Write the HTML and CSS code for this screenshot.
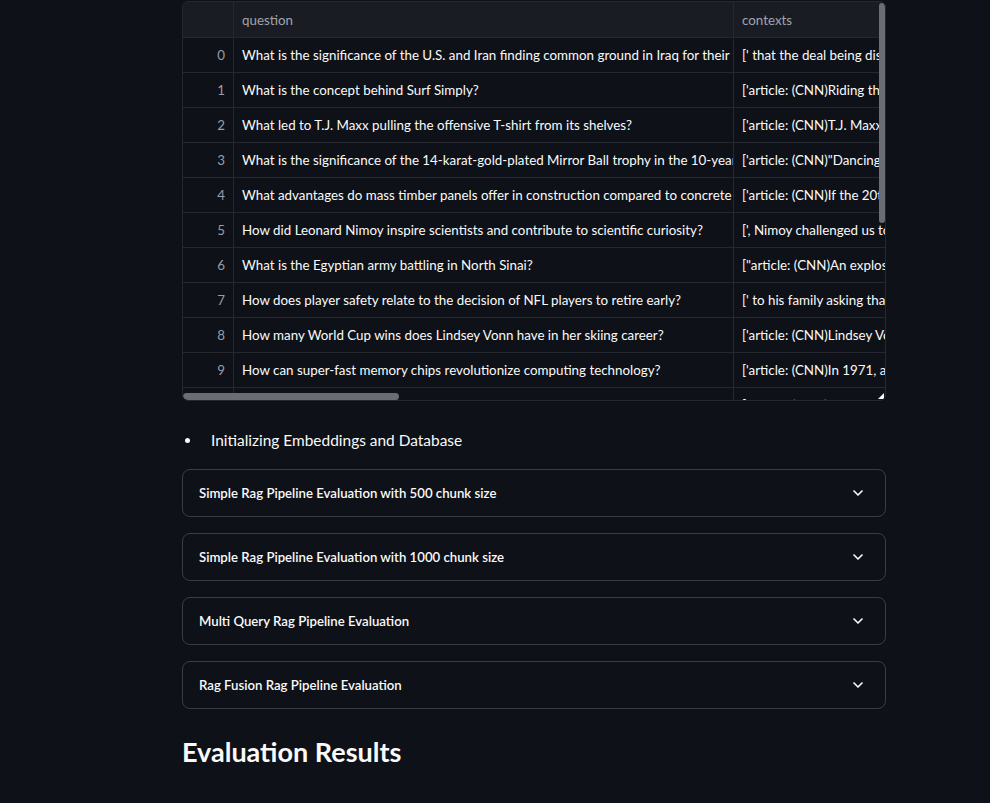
FILE: index.html
```html
<!DOCTYPE html>
<html>
<head>
<meta charset="utf-8">
<link rel="stylesheet" href="styles.css">
</head>
<body>
<div class="main">
  <div class="table">
    <div class="grid">
      <div class="row head">
        <div class="c idx"></div>
        <div class="c q">question</div>
        <div class="c ctx">contexts</div>
      </div>
      <div class="row"><div class="c idx">0</div><div class="c q">What is the significance of the U.S. and Iran finding common ground in Iraq for their fight against ISIS?</div><div class="c ctx">[' that the deal being discussed in Lausanne</div></div>
      <div class="row"><div class="c idx">1</div><div class="c q">What is the concept behind Surf Simply?</div><div class="c ctx">['article: (CNN)Riding the waves</div></div>
      <div class="row"><div class="c idx">2</div><div class="c q">What led to T.J. Maxx pulling the offensive T-shirt from its shelves?</div><div class="c ctx">['article: (CNN)T.J. Maxx has pulled</div></div>
      <div class="row"><div class="c idx">3</div><div class="c q">What is the significance of the 14-karat-gold-plated Mirror Ball trophy in the 10-year anniversary of Dancing with the Stars?</div><div class="c ctx">['article: (CNN)"Dancing With the Stars"</div></div>
      <div class="row"><div class="c idx">4</div><div class="c q">What advantages do mass timber panels offer in construction compared to concrete and steel?</div><div class="c ctx">['article: (CNN)If the 20th century</div></div>
      <div class="row"><div class="c idx">5</div><div class="c q">How did Leonard Nimoy inspire scientists and contribute to scientific curiosity?</div><div class="c ctx">[', Nimoy challenged us to boldly go</div></div>
      <div class="row"><div class="c idx">6</div><div class="c q">What is the Egyptian army battling in North Sinai?</div><div class="c ctx">["article: (CNN)An explosion targeted</div></div>
      <div class="row"><div class="c idx">7</div><div class="c q">How does player safety relate to the decision of NFL players to retire early?</div><div class="c ctx">[' to his family asking that</div></div>
      <div class="row"><div class="c idx">8</div><div class="c q">How many World Cup wins does Lindsey Vonn have in her skiing career?</div><div class="c ctx">['article: (CNN)Lindsey Vonn has</div></div>
      <div class="row"><div class="c idx">9</div><div class="c q">How can super-fast memory chips revolutionize computing technology?</div><div class="c ctx">['article: (CNN)In 1971, a tiny chip</div></div>
      <div class="row"><div class="c idx">10</div><div class="c q">What role did the Hubble Space Telescope play in astronomy?</div><div class="c ctx">['article: (CNN)The Hubble</div></div>
    </div>
    <div class="vscroll"></div>
    <div class="hscroll"></div>
    <div class="resize"></div>
  </div>

  <ul class="steps">
    <li>Initializing Embeddings and Database</li>
  </ul>

  <div class="expanders">
    <div class="exp"><span>Simple Rag Pipeline Evaluation with 500 chunk size</span><svg class="chev" viewBox="0 0 24 24"><path d="M6 9l6 6 6-6"/></svg></div>
    <div class="exp"><span>Simple Rag Pipeline Evaluation with 1000 chunk size</span><svg class="chev" viewBox="0 0 24 24"><path d="M6 9l6 6 6-6"/></svg></div>
    <div class="exp"><span>Multi Query Rag Pipeline Evaluation</span><svg class="chev" viewBox="0 0 24 24"><path d="M6 9l6 6 6-6"/></svg></div>
    <div class="exp"><span>Rag Fusion Rag Pipeline Evaluation</span><svg class="chev" viewBox="0 0 24 24"><path d="M6 9l6 6 6-6"/></svg></div>
  </div>

  <h2 class="title">Evaluation Results</h2>
</div>
</body>
</html>
```

FILE: styles.css
```css
html, body {
  margin: 0;
  padding: 0;
  background: #0e1117;
  color: #fafafa;
  font-family: Lato, "Noto Sans", sans-serif;
  overflow: hidden;
}
.main {
  width: 704px;
  margin-left: 182px;
  padding-top: 1px;
}
.table {
  position: relative;
  height: 398px;
  border: 1px solid #262830;
  border-radius: 6px;
  overflow: hidden;
}
.grid {
  display: flex;
  flex-direction: column;
}
.row {
  display: flex;
  height: 35px;
  flex: none;
  border-bottom: 1px solid #262830;
  box-sizing: border-box;
}
.row.head {
  background: #1a1c24;
  height: 36px;
  color: #a1a4ad;
}
.c {
  display: flex;
  align-items: center;
  font-size: 13.35px;
  white-space: nowrap;
  overflow: hidden;
  box-sizing: border-box;
  padding: 0 8px;
  flex: none;
}
.row:not(.head) .c {
  padding-bottom: 1px;
}
.idx {
  width: 51px;
  justify-content: flex-end;
  color: #9a9da6;
  border-right: 1px solid #262830;
  padding-right: 8px;
}
.q {
  width: 500px;
  border-right: 1px solid #262830;
}
.ctx {
  width: 200px;
}
.vscroll {
  position: absolute;
  right: 0;
  top: 1px;
  width: 6px;
  height: 220px;
  background: #6c6d72;
  border-radius: 3px;
}
.hscroll {
  position: absolute;
  left: 0;
  bottom: 0;
  width: 216px;
  height: 7px;
  background: #6c6d72;
  border-radius: 4px;
}
.resize {
  position: absolute;
  right: 1px;
  bottom: 1px;
  width: 0;
  height: 0;
  border-left: 6px solid transparent;
  border-bottom: 6px solid #fafafa;
}
.steps {
  list-style: none;
  margin: 24px 0 0 0;
  padding: 0 0 0 29px;
  font-size: 15.45px;
  line-height: 30px;
}
.steps li {
  position: relative;
}
.steps li::before {
  content: "";
  position: absolute;
  left: -26px;
  top: 13px;
  width: 5px;
  height: 5px;
  border-radius: 50%;
  background: #fafafa;
}
.expanders {
  display: flex;
  flex-direction: column;
  gap: 16px;
  margin-top: 14px;
}
.exp {
  height: 48px;
  box-sizing: border-box;
  border: 1px solid #3a3d46;
  border-radius: 8px;
  display: flex;
  align-items: center;
  justify-content: space-between;
  padding: 0 19px 0 16px;
  font-size: 13.2px;
  font-weight: 600;
}
.chev {
  width: 16px;
  height: 16px;
  fill: none;
  stroke: #fafafa;
  stroke-width: 2.5;
  stroke-linecap: round;
  stroke-linejoin: round;
}
.title {
  margin: 23px 0 0 0;
  font-size: 27px;
  font-weight: 700;
  line-height: 40px;
}
```
